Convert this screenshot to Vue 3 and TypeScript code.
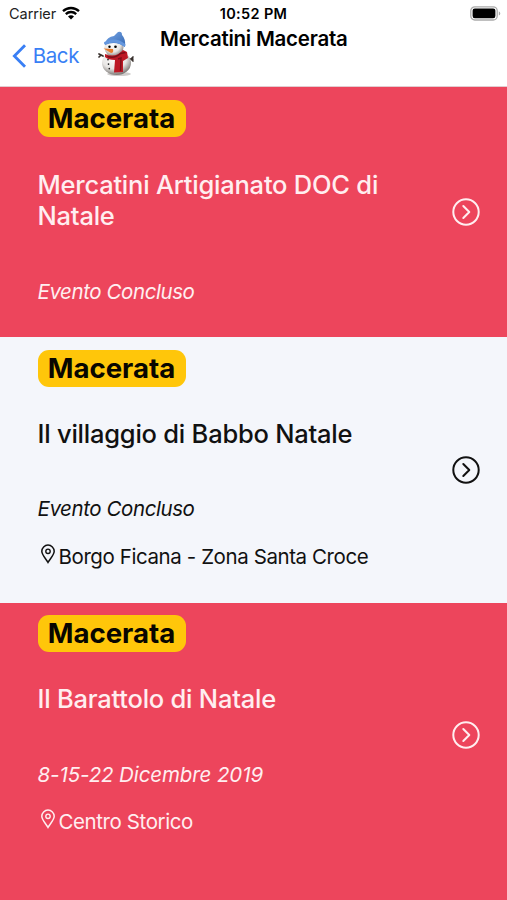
<script setup lang="ts">
interface MarketEvent {
  city: string
  title: string
  date: string
  place?: string
}

const events: MarketEvent[] = [
  { city: 'Macerata', title: 'Mercatini Artigianato DOC di Natale', date: 'Evento Concluso' },
  {
    city: 'Macerata',
    title: 'Il villaggio di Babbo Natale',
    date: 'Evento Concluso',
    place: 'Borgo Ficana - Zona Santa Croce',
  },
  { city: 'Macerata', title: 'Il Barattolo di Natale', date: '8-15-22 Dicembre 2019', place: 'Centro Storico' },
]
</script>

<template>
  <div class="screen">
    <header class="header">
      <div class="status">
        <div class="carrier">
          <span>Carrier</span>
          <svg class="wifi" viewBox="0 0 18 14">
            <path d="M1 5.2A11.6 11.6 0 0 1 17 5.2M3.8 8.1a7.5 7.5 0 0 1 10.4 0" fill="none" stroke="#000" stroke-width="2.3" />
            <path d="M6 10.4a4.2 4.2 0 0 1 6 0L9 13.5z" />
          </svg>
        </div>
        <time class="clock">10:52 PM</time>
        <svg class="battery" viewBox="0 0 31 15">
          <rect x=".8" y=".8" width="26.4" height="13.2" rx="4" fill="#fff" stroke="#aaa" stroke-width="1.3" />
          <rect x="2.6" y="2.6" width="22.8" height="9.6" rx="2.2" />
          <path d="M28.8 5.2c2 .8 2 3.6 0 4.4z" fill="#aaa" />
        </svg>
      </div>
      <div class="nav">
        <a class="back">
          <svg class="back-icon" viewBox="0 0 16 26">
            <path d="M13.7 1.8 2.5 13l11.2 11.2" fill="none" stroke="currentColor" stroke-width="3" />
          </svg>
          <span>Back</span>
        </a>
        <svg class="snowman" viewBox="0 0 38 46">
          <defs>
            <radialGradient id="snow" cx=".42" cy=".32" r=".7">
              <stop offset="0" stop-color="#fff" />
              <stop offset=".6" stop-color="#e8e6e4" />
              <stop offset="1" stop-color="#75716e" />
            </radialGradient>
            <linearGradient id="hat" x1="0" y1="0" x2="1" y2="1">
              <stop offset="0" stop-color="#78a7e8" />
              <stop offset="1" stop-color="#3468b2" />
            </linearGradient>
          </defs>
          <ellipse cx="22" cy="43" rx="12" ry="2" fill="#cfcccb" />
          <path d="m6 25-4-2m2 1-2 2m28 2 6 0m-2 0 2-2m-2 2 2 2" stroke="#38302d" stroke-width="1.700" fill="none" stroke-linecap="round" />
          <ellipse cx="19.500" cy="32" rx="14.500" ry="12" fill="url(#snow)" />
          <circle cx="17" cy="16.500" r="9.500" fill="url(#snow)" />
          <path d="M8 23q11 4.500 18-4l4 2 1 6-5 3v11l-9 .5 1-12.500q-7 0-10-3z" fill="#bd1925" />
          <path d="m21 28 3-1-.5 13m-13-14.500q7 2.500 13-3l5-1" fill="none" stroke="#7d101a" stroke-width="1.400" />
          <path d="M8 12Q10 6 17 5l4-4q4-1 4 3 4 4 3 12Q19 9 8 14z" fill="url(#hat)" />
          <path d="M8.500 12q10-5 18.500 2" fill="none" stroke="#6597de" stroke-width="3" stroke-linecap="round" />
          <circle cx="12.500" cy="15.800" r="1.200" />
          <circle cx="18.500" cy="15.800" r="1.300" />
          <path d="m16 18-9.500-.5 7.500 4.500q3 0 2-4z" fill="#e87b2f" />
          <path d="M11 28.500v.1m.5 4.400v.1m.8 4.400v.1" stroke="#222" stroke-width="1.700" stroke-linecap="round" />
        </svg>
        <h1 class="heading">Mercatini Macerata</h1>
      </div>
    </header>

    <ul class="list">
      <li v-for="event in events" :key="event.title" class="item">
        <div class="info">
          <span class="badge">{{ event.city }}</span>
          <h2 class="title">{{ event.title }}</h2>
          <p class="date">{{ event.date }}</p>
          <p v-if="event.place" class="place">
            <svg class="pin" viewBox="0 0 16 20">
              <path
                d="M8 18.500C6 15 1.800 10.800 1.800 7.300a6.200 6.200 0 0 1 12.400 0C14.200 10.800 10 15 8 18.500z"
                fill="none" stroke="currentColor" stroke-width="1.500"
              />
              <circle cx="8" cy="7.300" r="2.200" fill="none" stroke="currentColor" stroke-width="1.400" />
            </svg>
            <span>{{ event.place }}</span>
          </p>
        </div>
        <svg class="arrow" viewBox="0 0 28 28">
          <circle cx="14" cy="14" r="12.700" fill="none" stroke="currentColor" stroke-width="2" />
          <path d="m11.300 8 6 6-6 6" fill="none" stroke="currentColor" stroke-width="2" stroke-linecap="round" stroke-linejoin="round" />
        </svg>
      </li>
    </ul>
  </div>
</template>

<style>
body {
  background: #ed455c;
}
</style>

<style scoped>
.screen {
  width: 507px;
  height: 900px;
  overflow: hidden;
  background: #ed455c;
  font-family: Inter, 'Liberation Sans', sans-serif;
  color: #000;
}
.header {
  box-sizing: border-box;
  height: 87px;
  border-bottom: 1px solid #e3ccd0;
  background: #fff;
}
.status {
  display: grid;
  grid-template-columns: 1fr auto 1fr;
  align-items: center;
  height: 27px;
  padding: 0 6px 0 9px;
}
.carrier {
  display: flex;
  align-items: center;
  gap: 6px;
  font-size: 14.500px;
  letter-spacing: -0.050px;
  color: #222;
}
.wifi {
  width: 18px;
  height: 14px;
  margin-top: -2px;
}
.clock {
  font-size: 14.500px;
  font-weight: 600;
  letter-spacing: 0.350px;
  margin-right: 3px;
}
.battery {
  width: 31px;
  height: 15px;
  justify-self: end;
  margin-top: -1px;
}
.nav {
  display: flex;
  height: 59px;
}
.back {
  display: flex;
  align-items: center;
  gap: 5.500px;
  width: 67px;
  height: 57px;
  padding-left: 12px;
  color: #397ff5;
  font-size: 20.500px;
  letter-spacing: -0.400px;
}
.back-icon {
  width: 16px;
  height: 26px;
}
.snowman {
  width: 38px;
  height: 46px;
  margin: 4px 0 0 18px;
}
.heading {
  margin: 0 0 0 25px;
  font-size: 20.500px;
  font-weight: 600;
  line-height: 24px;
  letter-spacing: -0.240px;
}
.list {
  margin: 0;
  padding: 0;
  list-style: none;
}
.item {
  display: flex;
  align-items: center;
  box-sizing: border-box;
  height: 265.500px;
  padding: 0 27px 0 37.500px;
  color: #ffeef0;
}
.item:first-child {
  height: 250px;
}
.item:nth-child(even) {
  background: #f4f6fb;
  color: #111;
}
.info {
  flex: 1;
  align-self: flex-start;
  padding-top: 12.500px;
}
.badge {
  display: block;
  box-sizing: border-box;
  width: 148px;
  height: 37px;
  border-radius: 11px;
  background: #ffc60a;
  color: #080600;
  font-size: 27.600px;
  font-weight: 700;
  line-height: 37px;
  text-align: center;
}
.title {
  width: 360px;
  margin: 31px 0 0;
  font-size: 25.500px;
  font-weight: 500;
  line-height: 31.500px;
  letter-spacing: -0.230px;
}
.item:first-child .title {
  margin-top: 32px;
}
.date {
  margin: 46px 0 0;
  font-size: 20.500px;
  font-style: italic;
  line-height: 27px;
  letter-spacing: -0.420px;
}
.item:last-child .date {
  letter-spacing: -0.100px;
}
.place {
  display: flex;
  align-items: center;
  gap: 3px;
  margin: 20.500px 0 0;
  padding-left: 2px;
  font-size: 20.500px;
  line-height: 27px;
  letter-spacing: -0.410px;
}
.pin {
  width: 16px;
  height: 20px;
  margin-top: -5px;
}
.arrow {
  width: 28px;
  height: 28px;
}
</style>
